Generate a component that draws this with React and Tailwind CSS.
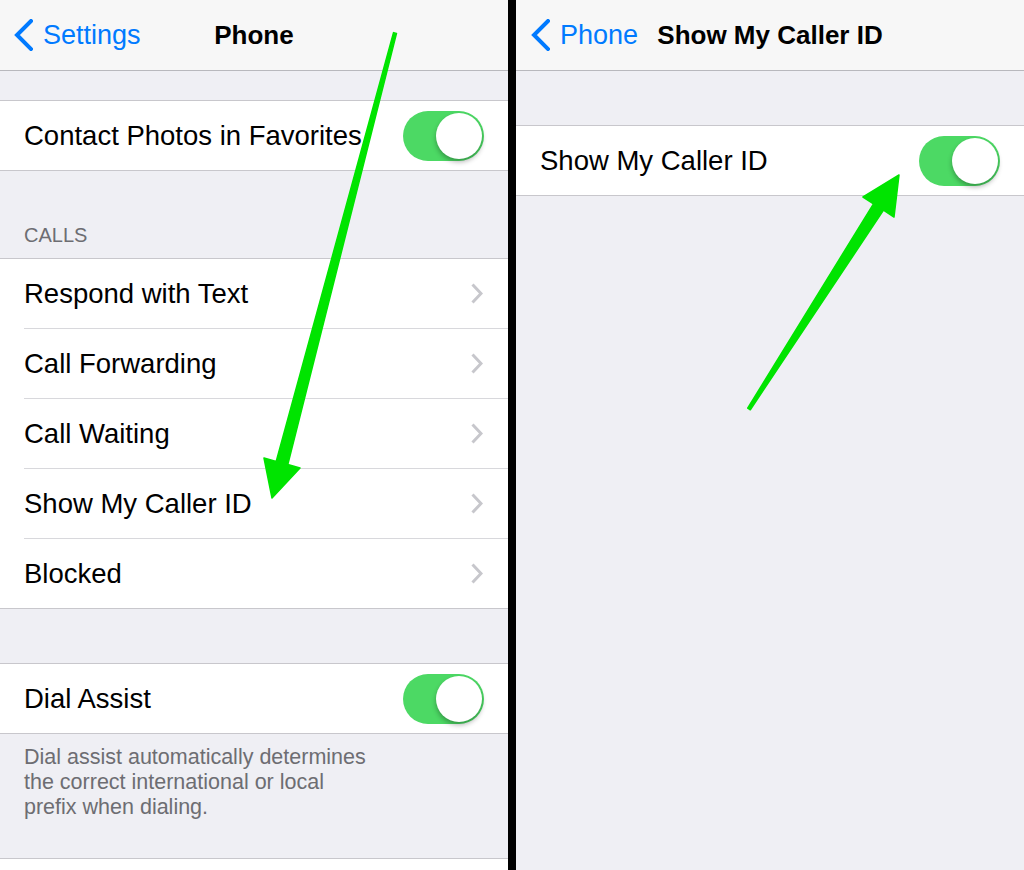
import React from 'react';

const font = { fontFamily: '"Helvetica Neue", "Liberation Sans", Arial, sans-serif' };

const BackChevron = () => (
  <svg width="20" height="32" viewBox="0 0 20 32" fill="none">
    <path d="M18 2 L4 16 L18 30" stroke="#007aff" strokeWidth="4" strokeLinecap="square" />
  </svg>
);

const Chevron = () => (
  <svg width="12" height="21" viewBox="0 0 12 21" fill="none">
    <path d="M1.5 1.5 L10 10.5 L1.5 19.5" stroke="#c7c7cc" strokeWidth="3" />
  </svg>
);

const Toggle = () => (
  <div className="flex h-[50px] w-[81px] justify-end rounded-full bg-[#4cd964] p-[2px]">
    <div className="h-[46px] w-[46px] rounded-full bg-white shadow-[0_3px_5px_rgba(0,0,0,0.3)]" />
  </div>
);

const NavBar = ({ back, title, pad }) => (
  <div className={`grid h-[71px] grid-cols-[1fr_auto_1fr] items-center border-b border-[#b8b8bd] bg-[#f7f7f7] ${pad}`}>
    <div className="flex items-center gap-[10px] text-[27px] text-[#007aff]">
      <BackChevron />
      <span>{back}</span>
    </div>
    <div className="text-[26px] font-bold text-black">{title}</div>
    <div />
  </div>
);

const Row = ({ label, toggle, last }) => (
  <div className="pl-6">
    <div
      className={`flex items-center justify-between pr-6 text-[27.5px] text-black ${
        last ? 'h-[69px]' : 'h-[70px] border-b border-[#d8d8dc]'
      }`}
    >
      <span>{label}</span>
      {toggle ? <Toggle /> : <span className="pr-[1px]"><Chevron /></span>}
    </div>
  </div>
);

const Group = ({ children, className = '' }) => (
  <div className={`border-y border-[#c8c7cc] bg-white ${className}`}>{children}</div>
);

const calls = ['Respond with Text', 'Call Forwarding', 'Call Waiting', 'Show My Caller ID', 'Blocked'];

export default function App() {
  return (
    <div className="relative flex h-[870px] w-[1024px] gap-[8px] overflow-hidden bg-black" style={font}>
      {/* left screen */}
      <div className="h-[870px] w-[508px] overflow-hidden bg-[#efeff4]">
        <NavBar back="Settings" title="Phone" pad="px-[13px]" />
        <Group className="mt-[29px]">
          <Row label="Contact Photos in Favorites" toggle last />
        </Group>
        <div className="flex h-[87px] items-end pb-[8px] pl-6 text-[20px] leading-[30px] text-[#6d6d72]">CALLS</div>
        <Group>
          {calls.map((c, i) => (
            <Row key={c} label={c} last={i === calls.length - 1} />
          ))}
        </Group>
        <Group className="mt-[54px]">
          <Row label="Dial Assist" toggle last />
        </Group>
        <div className="pl-6 pt-[11px] text-[21.5px] leading-[25px] text-[#6d6d72]">
          Dial assist automatically determines
          <br />
          the correct international or local
          <br />
          prefix when dialing.
        </div>
        <Group className="mt-[38px] h-[70px]" />
      </div>

      {/* right screen */}
      <div className="h-[870px] w-[508px] overflow-hidden bg-[#efeff4]">
        <NavBar back="Phone" title="Show My Caller ID" pad="px-[14px]" />
        <Group className="mt-[54px]">
          <Row label="Show My Caller ID" toggle last />
        </Group>
      </div>

      {/* annotation arrows */}
      <svg className="pointer-events-none absolute inset-0" width="1024" height="870" viewBox="0 0 1024 870">
        <polygon
          points="396.5,33.4 287.8,464.5 300,468 272,498 264,458 276.2,461.5 393.5,32.6"
          fill="#00e400"
          stroke="#00e400"
          strokeWidth="1.5"
          strokeLinejoin="round"
        />
        <polygon
          points="750.3,409.8 883.5,210.2 894,217 899,175 863,197 873.5,203.8 747.7,408.2"
          fill="#00e400"
          stroke="#00e400"
          strokeWidth="1.5"
          strokeLinejoin="round"
        />
      </svg>
    </div>
  );
}
